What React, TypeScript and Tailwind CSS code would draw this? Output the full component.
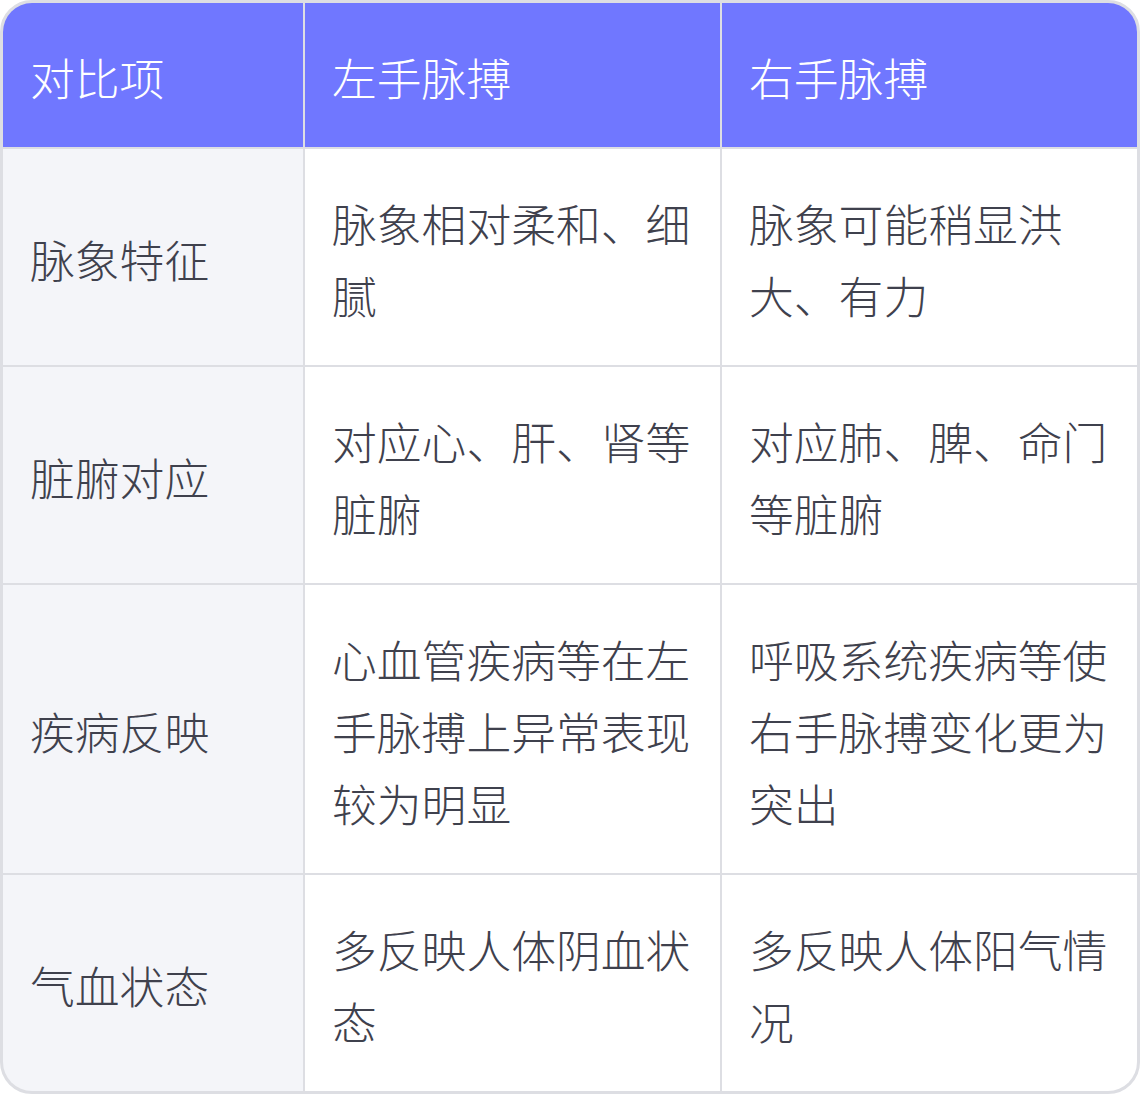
const header = ["对比项", "左手脉搏", "右手脉搏"];

const rows: [string, string, string][] = [
  ["脉象特征", "脉象相对柔和、细腻", "脉象可能稍显洪大、有力"],
  ["脏腑对应", "对应心、肝、肾等脏腑", "对应肺、脾、命门等脏腑"],
  ["疾病反映", "心血管疾病等在左手脉搏上异常表现较为明显", "呼吸系统疾病等使右手脉搏变化更为突出"],
  ["气血状态", "多反映人体阴血状态", "多反映人体阳气情况"],
];

const font = "font-['Noto_Sans_CJK_SC','Noto_Sans',sans-serif]";

export default function App() {
  return (
    <div className={`w-[1140px] ${font} text-[44.8px] leading-[72px] font-light`}>
      <div className="overflow-hidden rounded-[32px] border-[3px] border-[#dddee3] bg-[#dddee3]">
        <div className="grid grid-cols-[300px_415px_415px] gap-[2px]">
          {header.map((h) => (
            <div key={h} className="bg-[#7077ff] px-[27px] pt-[38px] pb-[34px] text-white">
              {h}
            </div>
          ))}
          {rows.map((r) => (
            <div key={r[0]} className="contents">
              <div className="flex items-center bg-[#f4f5f9] px-[27px] pt-[38px] pb-[34px] text-[#3f414d]">
                {r[0]}
              </div>
              <div className="flex items-center bg-white px-[27px] pt-[38px] pb-[34px] text-[#3f414d]">
                {r[1]}
              </div>
              <div className="flex items-center bg-white px-[27px] pt-[38px] pb-[34px] text-[#3f414d]">
                {r[2]}
              </div>
            </div>
          ))}
        </div>
      </div>
    </div>
  );
}
